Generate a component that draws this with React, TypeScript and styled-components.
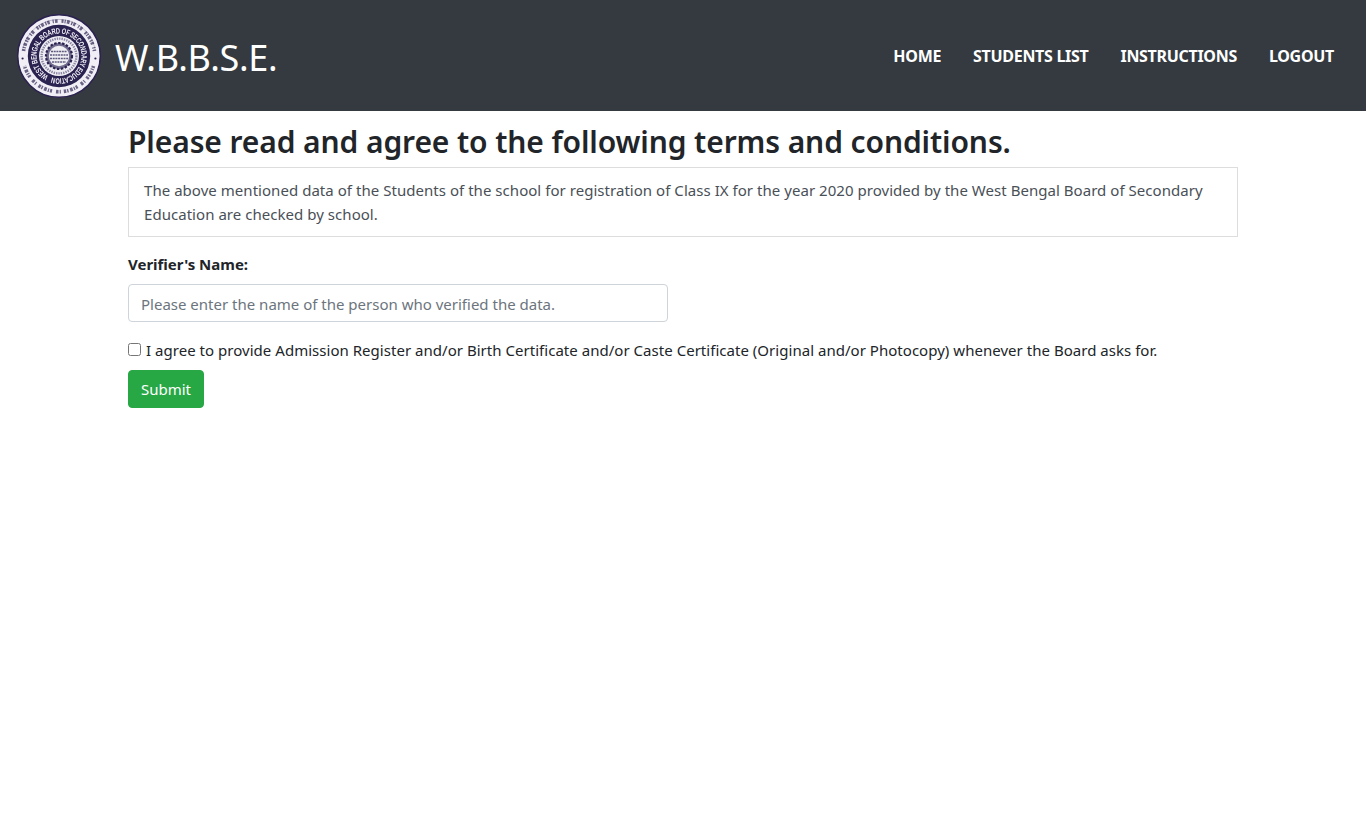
import React from "react";
import styled, { createGlobalStyle } from "styled-components";

const Global = createGlobalStyle`
  html, body { margin: 0; padding: 0; background: #fff; }
  body {
    font-family: "Noto Sans", "Open Sans", "Liberation Sans", sans-serif;
    font-size: 15px;
    line-height: 24px;
    color: #212529;
  }
  * { box-sizing: border-box; }
`;

const Navbar = styled.nav`
  height: 111px;
  background: #343a40;
  display: flex;
  align-items: center;
  justify-content: space-between;
  padding: 0 16px;
`;
const Brand = styled.a`
  display: flex;
  align-items: center;
  gap: 13px;
  color: #fff;
  font-size: 36px;
  line-height: 1;
  letter-spacing: -0.35px;
`;
const BrandText = styled.span`
  padding-top: 5px;
`;
const NavList = styled.ul`
  display: flex;
  align-items: center;
  gap: 32px;
  list-style: none;
  margin: 0;
  padding: 0 16px 0 0;
`;
const NavLink = styled.a`
  color: #fff;
  font-size: 16px;
  font-weight: 700;
  letter-spacing: -0.3px;
  text-transform: uppercase;
`;
const Container = styled.main`
  width: 1140px;
  margin: 0 auto;
  padding: 8px 15px 0;
`;
const Heading = styled.h2`
  margin: 0 0 5px;
  font-size: 30px;
  font-weight: 600;
  line-height: 36px;
  height: 43px;
  padding-top: 5px;
  letter-spacing: -0.1px;
  white-space: nowrap;
`;
const Terms = styled.div`
  border: 1px solid #ddd;
  padding: 10px 15px;
  color: #495057;
  letter-spacing: 0.04px;
  margin-bottom: 15px;
`;
const Label = styled.label`
  display: block;
  font-weight: 700;
  height: 24px;
  margin-bottom: 8px;
`;
const Input = styled.input`
  display: block;
  width: 540px;
  height: 38px;
  padding: 7px 12px 5px;
  border: 1px solid #ced4da;
  border-radius: 4px;
  font: inherit;
  color: #495057;
  &::placeholder { color: #6c757d; opacity: 1; }
`;
const CheckRow = styled.label`
  display: flex;
  align-items: center;
  height: 24px;
  margin-top: 16px;
  letter-spacing: 0.03px;
  white-space: nowrap;
`;
const Check = styled.input`
  width: 13px;
  height: 13px;
  margin: 0 5px 2px 0;
`;
const SubmitButton = styled.button`
  display: block;
  margin-top: 8px;
  width: 76px;
  height: 38px;
  padding: 0;
  border: 1px solid #28a745;
  border-radius: 4px;
  background: #28a745;
  color: #fff;
  font: inherit;
`;

const Logo = () => (
  <svg width="86" height="86" viewBox="0 0 86 86" aria-hidden="true">
    <defs>
      <filter id="soft" x="-5%" y="-5%" width="110%" height="110%">
        <feGaussianBlur stdDeviation="0.42" />
      </filter>
      <path id="bandTop" d="M 43 43 m -22.4 0 a 22.4 22.4 0 1 1 44.8 0 a 22.4 22.4 0 1 1 -44.8 0" transform="rotate(-62 43 43)" />
    </defs>
    <g filter="url(#soft)">
      <circle cx="43" cy="43" r="41.3" fill="#f1eff5" stroke="#2b2050" strokeWidth="1.5" />
      <path d="M10.5 36A33 33 0 0 1 75.5 36M74 55A33.5 33.5 0 0 1 12 55" fill="none" stroke="#2b2050" strokeWidth="0" />
      <path d="M7.5 38A36 36 0 0 1 78.5 38M77.5 53A36 36 0 0 1 8.5 53" fill="none" stroke="#2b2050" strokeWidth="3.6" strokeDasharray="2 1 1.2 1.2 2.8 1.6 1.4 0.9 2.4 3 1.2 1.2 2.6 4" opacity="0.68" />
      <path d="M7 35.6A36.8 36.8 0 0 1 79 35.6" fill="none" stroke="#2b2050" strokeWidth="0.6" opacity="0.45" />
      <circle cx="43" cy="43" r="31.2" fill="#29204f" />
      <text fontFamily="Liberation Sans, sans-serif" fontSize="8" fontWeight="700" fill="#f1eff6">
        <textPath href="#bandTop" textLength="136" lengthAdjust="spacingAndGlyphs">WEST BENGAL BOARD OF SECONDARY EDUCATION</textPath>
      </text>
      <circle cx="43" cy="43" r="20" fill="#efedf4" />
      <circle cx="43" cy="43" r="17.4" fill="none" stroke="#3b3160" strokeWidth="2.4" strokeDasharray="1.4 1" opacity="0.55" />
      <circle cx="43" cy="43" r="13" fill="#6f6a8c" />
      <circle cx="43" cy="43" r="13" fill="none" stroke="#2b2050" strokeWidth="2.2" strokeDasharray="2.4 1.6" />
      <circle cx="43" cy="43" r="10.2" fill="#eeeef3" />
      <path d="M35 38.5h16M34 42h18M34 45.5h18M36 49h14" stroke="#3a3360" strokeWidth="1.7" strokeDasharray="2 0.7" opacity="0.8" />
      <circle cx="6.6" cy="45.5" r="1.1" fill="#2b2050" />
      <circle cx="79.4" cy="45.5" r="1.1" fill="#2b2050" />
    </g>
  </svg>
);

export default function App() {
  return (
    <>
      <Global />
      <Navbar>
        <Brand>
          <Logo />
          <BrandText>W.B.B.S.E.</BrandText>
        </Brand>
        <NavList>
          <li><NavLink>Home</NavLink></li>
          <li><NavLink>Students List</NavLink></li>
          <li><NavLink>Instructions</NavLink></li>
          <li><NavLink>Logout</NavLink></li>
        </NavList>
      </Navbar>
      <Container>
        <Heading>Please read and agree to the following terms and conditions.</Heading>
        <Terms>
          The above mentioned data of the Students of the school for registration of Class IX for the year 2020 provided by the West Bengal Board of Secondary Education are checked by school.
        </Terms>
        <Label htmlFor="verifier">Verifier's Name:</Label>
        <Input id="verifier" type="text" placeholder="Please enter the name of the person who verified the data." />
        <CheckRow>
          <Check type="checkbox" />
          I agree to provide Admission Register and/or Birth Certificate and/or Caste Certificate (Original and/or Photocopy) whenever the Board asks for.
        </CheckRow>
        <SubmitButton type="button">Submit</SubmitButton>
      </Container>
    </>
  );
}
